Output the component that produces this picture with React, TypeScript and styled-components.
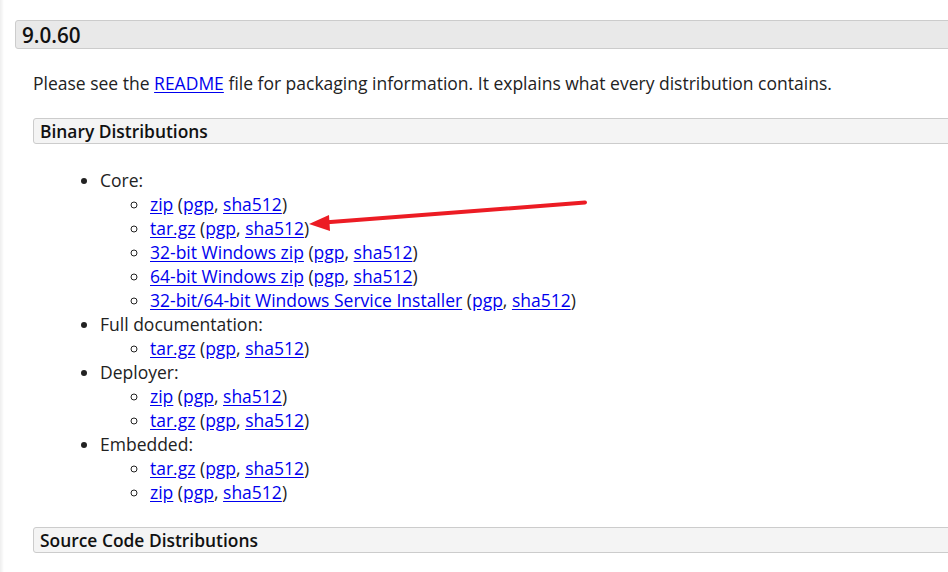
import React from "react";
import styled, { createGlobalStyle } from "styled-components";

const Global = createGlobalStyle`
  html, body { margin: 0; padding: 0; background: #fff; }
  body {
    font-family: "Open Sans", "Noto Sans", sans-serif;
    color: #222;
    overflow: hidden;
  }
`;

const Page = styled.div`
  position: relative;
  width: 948px;
  height: 572px;
  overflow: hidden;
  padding: 20px 0 0 15px;
  box-sizing: border-box;
  background: linear-gradient(to right, #eee 0px, #f6f6f6 2px, #fff 4px);
`;

const VersionHeader = styled.h3`
  margin: 0 -20px 0 0;
  height: 29px;
  box-sizing: border-box;
  border: 1px solid #ccc;
  border-radius: 3px;
  background: #e9e9e9;
  font-size: 20.7px;
  font-weight: 600;
  line-height: 28px;
  padding-left: 6px;
  color: #111;
`;

const Body = styled.div`
  padding-left: 18px;
`;

const Para = styled.p`
  margin: 22px 0 23px 0;
  font-size: 17.5px;
  line-height: 24px;
`;

const SectionHeader = styled.h4`
  margin: 0 -20px 0 0;
  height: 26px;
  box-sizing: border-box;
  border: 1px solid #ccc;
  border-radius: 3px;
  background: #f4f4f4;
  font-size: 17.4px;
  font-weight: 600;
  line-height: 24px;
  padding-left: 6px;
  color: #111;
`;

const TopList = styled.ul`
  margin: 24px 0 23px 0;
  padding-left: 67px;
  list-style: disc;
  font-size: 17.5px;
  line-height: 24px;
`;

const SubList = styled.ul`
  margin: 0;
  padding-left: 50px;
  list-style: circle;
`;

const Link = styled.a`
  color: #0000ee;
  text-decoration: underline;
  text-underline-offset: 2px;
`;

const ArrowSvg = styled.svg`
  position: absolute;
  left: 0;
  top: 0;
  pointer-events: none;
`;

type Item = { label: string };

const Dl = ({ label }: Item) => (
  <li>
    <Link href="#">{label}</Link> (<Link href="#">pgp</Link>, <Link href="#">sha512</Link>)
  </li>
);

const groups: { title: string; items: string[] }[] = [
  {
    title: "Core:",
    items: [
      "zip",
      "tar.gz",
      "32-bit Windows zip",
      "64-bit Windows zip",
      "32-bit/64-bit Windows Service Installer",
    ],
  },
  { title: "Full documentation:", items: ["tar.gz"] },
  { title: "Deployer:", items: ["zip", "tar.gz"] },
  { title: "Embedded:", items: ["tar.gz", "zip"] },
];

export default function App() {
  return (
    <>
      <Global />
      <Page>
        <VersionHeader>9.0.60</VersionHeader>
        <Body>
          <Para>
            Please see the <Link href="#">README</Link> file for packaging information. It explains
            what every distribution contains.
          </Para>
          <SectionHeader>Binary Distributions</SectionHeader>
          <TopList>
            {groups.map((g) => (
              <li key={g.title}>
                {g.title}
                <SubList>
                  {g.items.map((it, i) => (
                    <Dl key={i} label={it} />
                  ))}
                </SubList>
              </li>
            ))}
          </TopList>
          <SectionHeader>Source Code Distributions</SectionHeader>
        </Body>
        <ArrowSvg width="948" height="572" viewBox="0 0 948 572">
          <line x1="585" y1="202.5" x2="324" y2="222.5" stroke="#ec1c24" strokeWidth="4" strokeLinecap="round" />
          <polygon points="309,224 329,215 330,231" fill="#ec1c24" />
        </ArrowSvg>
      </Page>
    </>
  );
}
